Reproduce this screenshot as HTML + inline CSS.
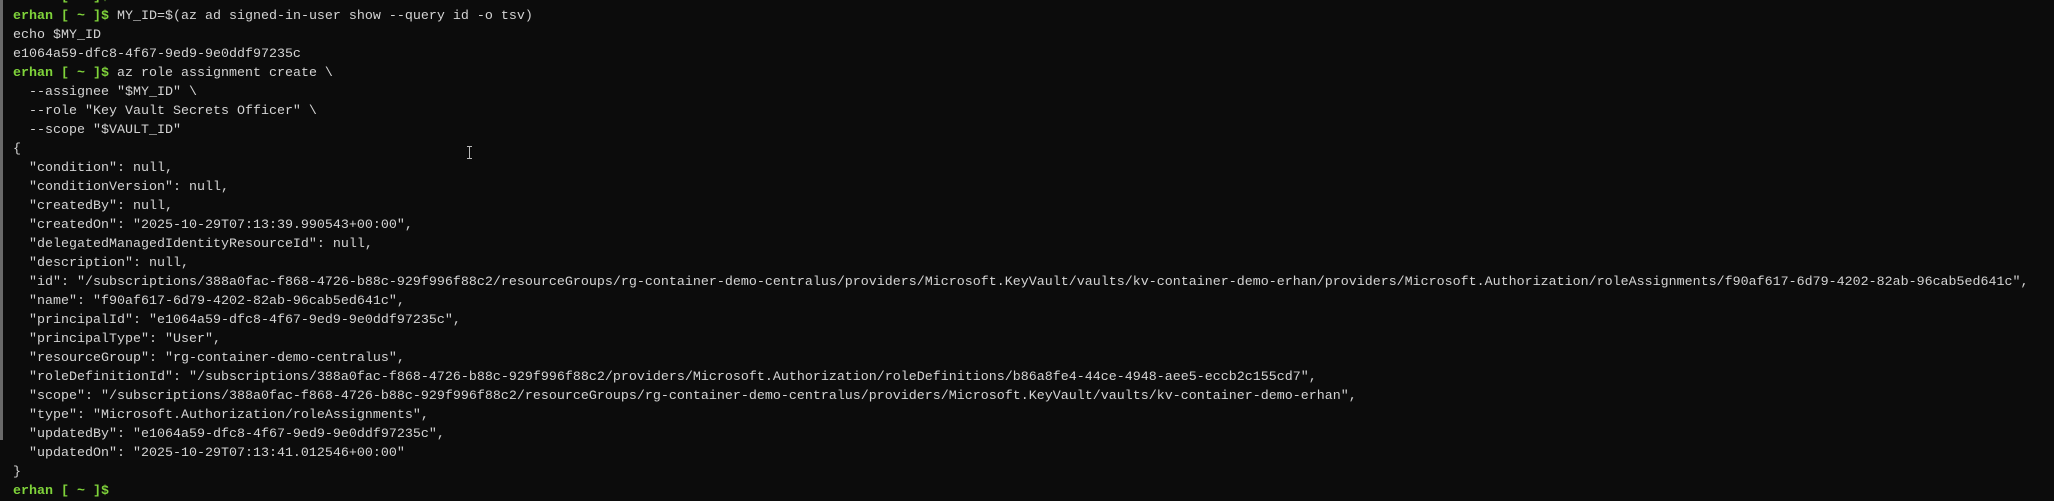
<!DOCTYPE html>
<html><head><meta charset="utf-8"><style>
html,body{margin:0;padding:0;background:#0c0c0c;width:2054px;height:485px;overflow:hidden}
.bar{position:absolute;left:0;top:0;width:3px;height:440px;background:#6a6a6a}
pre{position:absolute;left:13px;top:-12px;margin:0;font-family:"Liberation Mono",monospace;font-size:13.33px;line-height:19px;color:#d4d4d4;white-space:pre}
b{color:#7fd33a;font-weight:bold}
.cur{position:absolute;left:469px;top:146px;width:1px;height:13px;background:#bbb}
.cur:before,.cur:after{content:"";position:absolute;left:-2px;width:5px;height:1px;background:#bbb}
.cur:before{top:0}.cur:after{bottom:0}
</style></head><body>
<div class="bar"></div>
<pre><b>erhan [ ~ ]$</b>
<b>erhan [ ~ ]$</b> MY_ID=$(az ad signed-in-user show --query id -o tsv)
echo $MY_ID
e1064a59-dfc8-4f67-9ed9-9e0ddf97235c
<b>erhan [ ~ ]$</b> az role assignment create \
  --assignee "$MY_ID" \
  --role "Key Vault Secrets Officer" \
  --scope "$VAULT_ID"
{
  "condition": null,
  "conditionVersion": null,
  "createdBy": null,
  "createdOn": "2025-10-29T07:13:39.990543+00:00",
  "delegatedManagedIdentityResourceId": null,
  "description": null,
  "id": "/subscriptions/388a0fac-f868-4726-b88c-929f996f88c2/resourceGroups/rg-container-demo-centralus/providers/Microsoft.KeyVault/vaults/kv-container-demo-erhan/providers/Microsoft.Authorization/roleAssignments/f90af617-6d79-4202-82ab-96cab5ed641c",
  "name": "f90af617-6d79-4202-82ab-96cab5ed641c",
  "principalId": "e1064a59-dfc8-4f67-9ed9-9e0ddf97235c",
  "principalType": "User",
  "resourceGroup": "rg-container-demo-centralus",
  "roleDefinitionId": "/subscriptions/388a0fac-f868-4726-b88c-929f996f88c2/providers/Microsoft.Authorization/roleDefinitions/b86a8fe4-44ce-4948-aee5-eccb2c155cd7",
  "scope": "/subscriptions/388a0fac-f868-4726-b88c-929f996f88c2/resourceGroups/rg-container-demo-centralus/providers/Microsoft.KeyVault/vaults/kv-container-demo-erhan",
  "type": "Microsoft.Authorization/roleAssignments",
  "updatedBy": "e1064a59-dfc8-4f67-9ed9-9e0ddf97235c",
  "updatedOn": "2025-10-29T07:13:41.012546+00:00"
}
<b>erhan [ ~ ]$</b></pre>
<div class="cur"></div>
</body></html>
